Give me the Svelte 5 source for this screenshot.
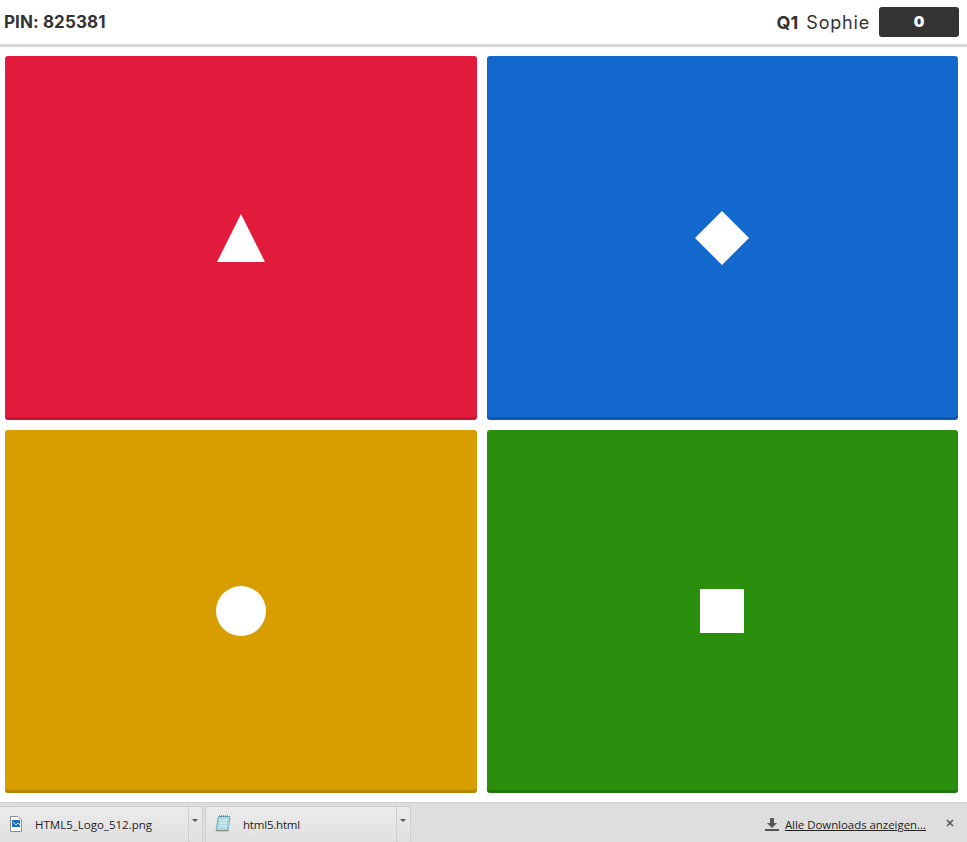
<script>
  const answers = [
    { name: "red", shape: "triangle" },
    { name: "blue", shape: "diamond" },
    { name: "yellow", shape: "circle" },
    { name: "green", shape: "square" }
  ];
</script>

<div class="page">
  <header class="topbar">
    <div class="pin">PIN: 825381</div>
    <div class="player">
      <span class="question">Q1</span>
      <span class="nickname">Sophie</span>
      <span class="score">0</span>
    </div>
  </header>

  <main class="answers">
    {#each answers as a (a.name)}
      <button class="answer {a.name}" aria-label={a.shape}>
        {#if a.shape === "triangle"}
          <svg width="48" height="48" viewBox="0 0 48 48"><polygon points="24,0 48,48 0,48" fill="#fff" /></svg>
        {:else if a.shape === "diamond"}
          <svg width="54" height="54" viewBox="0 0 54 54"><polygon points="27,0 54,27 27,54 0,27" fill="#fff" /></svg>
        {:else if a.shape === "circle"}
          <svg width="50" height="50" viewBox="0 0 50 50"><circle cx="25" cy="25" r="25" fill="#fff" /></svg>
        {:else}
          <svg width="44" height="44" viewBox="0 0 44 44"><rect width="44" height="44" fill="#fff" /></svg>
        {/if}
      </button>
    {/each}
  </main>

  <footer class="downloads">
    <div class="item first">
      <div class="item-main">
        <svg class="file" width="14" height="16" viewBox="0 0 14 16">
          <path d="M1.500.5h7.500l3.500 3.500v11.500h-11z" fill="#fff" stroke="#8a8f96" />
          <rect x="3" y="4" width="8" height="7" fill="#1f6fc4" />
          <path d="M4 6l3 3 2-2 2 2" fill="none" stroke="#cfe6fa" />
        </svg>
        <span class="filename">HTML5_Logo_512.png</span>
      </div>
      <div class="caret"></div>
    </div>
    <div class="item second">
      <div class="item-main">
        <svg class="file" width="16" height="17" viewBox="0 0 16 17">
          <path d="M3.500 1.500h11.500l-2 14h-12z" fill="#a8d8e4" stroke="#7fa9b5" />
          <path d="M4.500 5h8M4 8h8M3.500 11h8" stroke="#e4f3f7" />
          <path d="M1 15.800h12l.6-1" fill="none" stroke="#8f8468" />
          <path d="M4 1h10" stroke="#555" stroke-dasharray="1 1" />
        </svg>
        <span class="filename">html5.html</span>
      </div>
      <div class="caret"></div>
    </div>
    <div class="bar-right">
      <svg class="save" width="14" height="13" viewBox="0 0 14 13">
        <path d="M5 0h4v5h3l-5 5-5-5h3z" fill="#555" />
        <rect y="11" width="14" height="2" fill="#555" />
      </svg>
      <span class="all">Alle Downloads anzeigen...</span>
      <svg class="close" width="8" height="8" viewBox="0 0 8 8">
        <path d="M1 1l6 6M7 1l-6 6" stroke="#555" stroke-width="1.500" />
      </svg>
    </div>
  </footer>
</div>

<style>
  :global(body) {
    background: #fff;
  }

  .page {
    width: 967px;
    height: 842px;
    display: flex;
    flex-direction: column;
    overflow: hidden;
    font-family: Inter, "Liberation Sans", sans-serif;
    color: #333;
  }

  .topbar {
    height: 47px;
    box-sizing: border-box;
    flex: none;
    display: flex;
    align-items: center;
    justify-content: space-between;
    padding: 0 8px 0 4px;
    border-bottom: 3px solid #d9d9d9;
  }

  .pin {
    font-size: 17px;
    font-weight: 700;
    letter-spacing: 0.1px;
  }

  .player {
    display: flex;
    align-items: center;
  }

  .question {
    font-size: 18px;
    font-weight: 700;
    margin-right: 8px;
  }

  .nickname {
    font-size: 18px;
    letter-spacing: 0.8px;
    margin-right: 9px;
  }

  .score {
    width: 80px;
    height: 30px;
    box-sizing: border-box;
    display: flex;
    align-items: center;
    justify-content: center;
    padding-bottom: 2px;
    background: #333;
    color: #fff;
    font-size: 15px;
    font-weight: 900;
    border-radius: 3px;
  }

  .answers {
    flex: none;
    padding: 9px 9px 0 5px;
    display: grid;
    grid-template-columns: 472px 471px;
    grid-template-rows: 364px 363px;
    gap: 10px;
  }

  .answer {
    display: flex;
    align-items: center;
    justify-content: center;
    padding: 0;
    border: 0;
    border-radius: 3px;
    box-shadow: inset 0 -3px 0 rgba(0, 0, 0, 0.15);
  }

  .red {
    background: #e21b3c;
  }

  .blue {
    background: #1368ce;
    padding-right: 1px;
  }

  .yellow {
    background: #d89e00;
    padding-bottom: 1px;
  }

  .green {
    background: #298f0d;
    padding: 0 1px 1px 0;
  }

  .downloads {
    margin-top: 9px;
    flex: 1;
    display: flex;
    align-items: flex-end;
    background: #dedede;
    border-top: 1px solid #d2d2d2;
    font-family: "Open Sans", "Liberation Sans", sans-serif;
    font-size: 11.500px;
    color: #222;
  }

  .item {
    height: 36px;
    box-sizing: border-box;
    display: flex;
    background: linear-gradient(#ebebeb, #e0e0e0);
    border: 1px solid #cfcfcf;
    border-bottom: 0;
    border-radius: 3px 3px 0 0;
  }

  .item.first {
    width: 203px;
    border-left: 0;
    margin-right: 2px;
  }

  .item.second {
    width: 206px;
  }

  .item-main {
    flex: 1;
    display: flex;
    align-items: center;
    border-right: 1px solid #cfcfcf;
  }

  .file {
    margin-bottom: 2px;
  }

  .first .file {
    margin-left: 9px;
  }

  .first .filename {
    margin-left: 12px;
  }

  .second .file {
    margin-left: 9px;
  }

  .second .filename {
    margin-left: 12px;
    letter-spacing: -0.2px;
  }

  .caret {
    width: 13px;
    position: relative;
  }

  .caret::after {
    content: "";
    position: absolute;
    left: 3px;
    top: 12px;
    border: 3px solid transparent;
    border-top: 3px solid #555;
  }

  .bar-right {
    margin-left: auto;
    height: 39px;
    box-sizing: border-box;
    padding: 4px 13px 0 0;
    display: flex;
    align-items: center;
  }

  .save {
    margin-right: 6px;
  }

  .all {
    text-decoration: underline;
    margin-right: 20px;
    font-size: 11.400px;
  }

  .close {
    margin-bottom: 4px;
  }
</style>
